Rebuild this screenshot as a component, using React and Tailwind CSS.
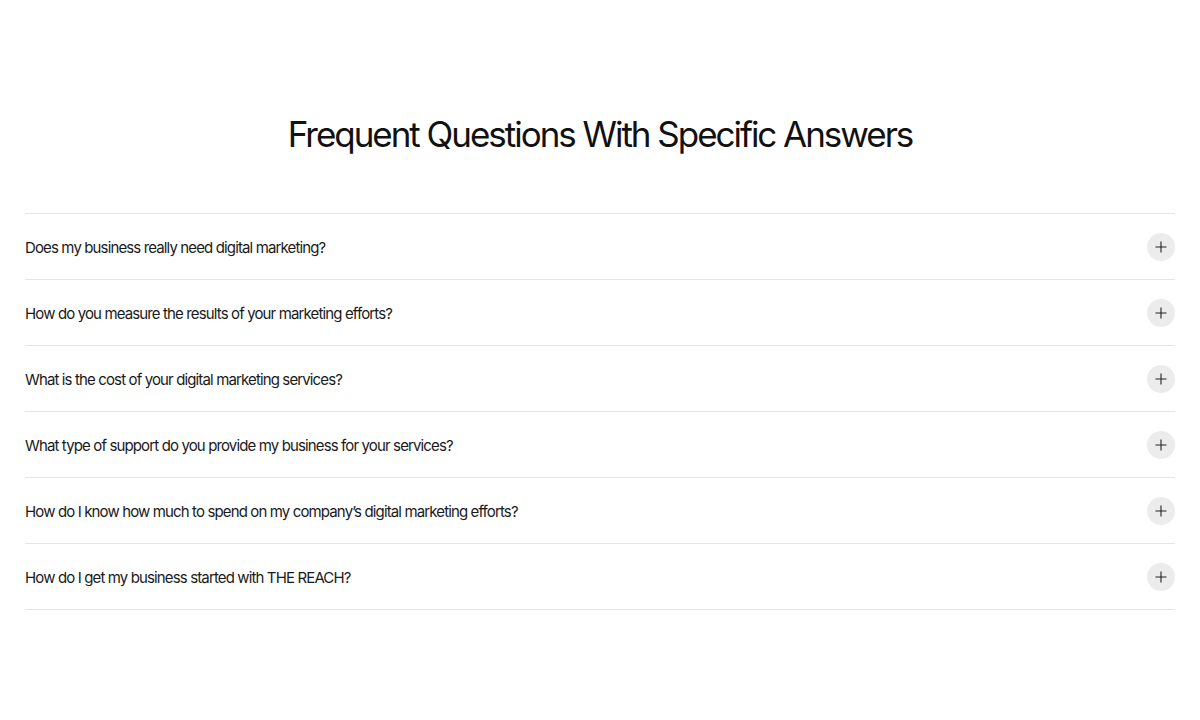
import React from "react";

const questions = [
  "Does my business really need digital marketing?",
  "How do you measure the results of your marketing efforts?",
  "What is the cost of your digital marketing services?",
  "What type of support do you provide my business for your services?",
  "How do I know how much to spend on my company’s digital marketing efforts?",
  "How do I get my business started with THE REACH?",
];

export default function App() {
  return (
    <div className="min-h-[720px] w-[1200px] bg-white text-[#111]" style={{ fontFamily: "Inter, 'Liberation Sans', sans-serif" }}>
      <div className="px-[25px] pt-[112px]">
        <h1 className="text-center text-[35px] leading-[44px] tracking-[-0.058em] font-normal">
          Frequent Questions With Specific Answers
        </h1>
        <div className="mt-[57px] border-b border-[#e5e5e5]">
          {questions.map((q) => (
            <div key={q} className="flex h-[66px] items-center justify-between border-t border-[#e5e5e5]">
              <span className="pt-[3px] text-[15px] tracking-[-0.058em] text-[#1a1a1a]">{q}</span>
              <span className="flex h-[28px] w-[28px] items-center justify-center rounded-full bg-[#ececec]">
                <svg width="12" height="12" viewBox="0 0 12 12" fill="none" stroke="#222" strokeWidth="1.1">
                  <path d="M6 0.5v11M0.5 6h11" />
                </svg>
              </span>
            </div>
          ))}
        </div>
      </div>
    </div>
  );
}
